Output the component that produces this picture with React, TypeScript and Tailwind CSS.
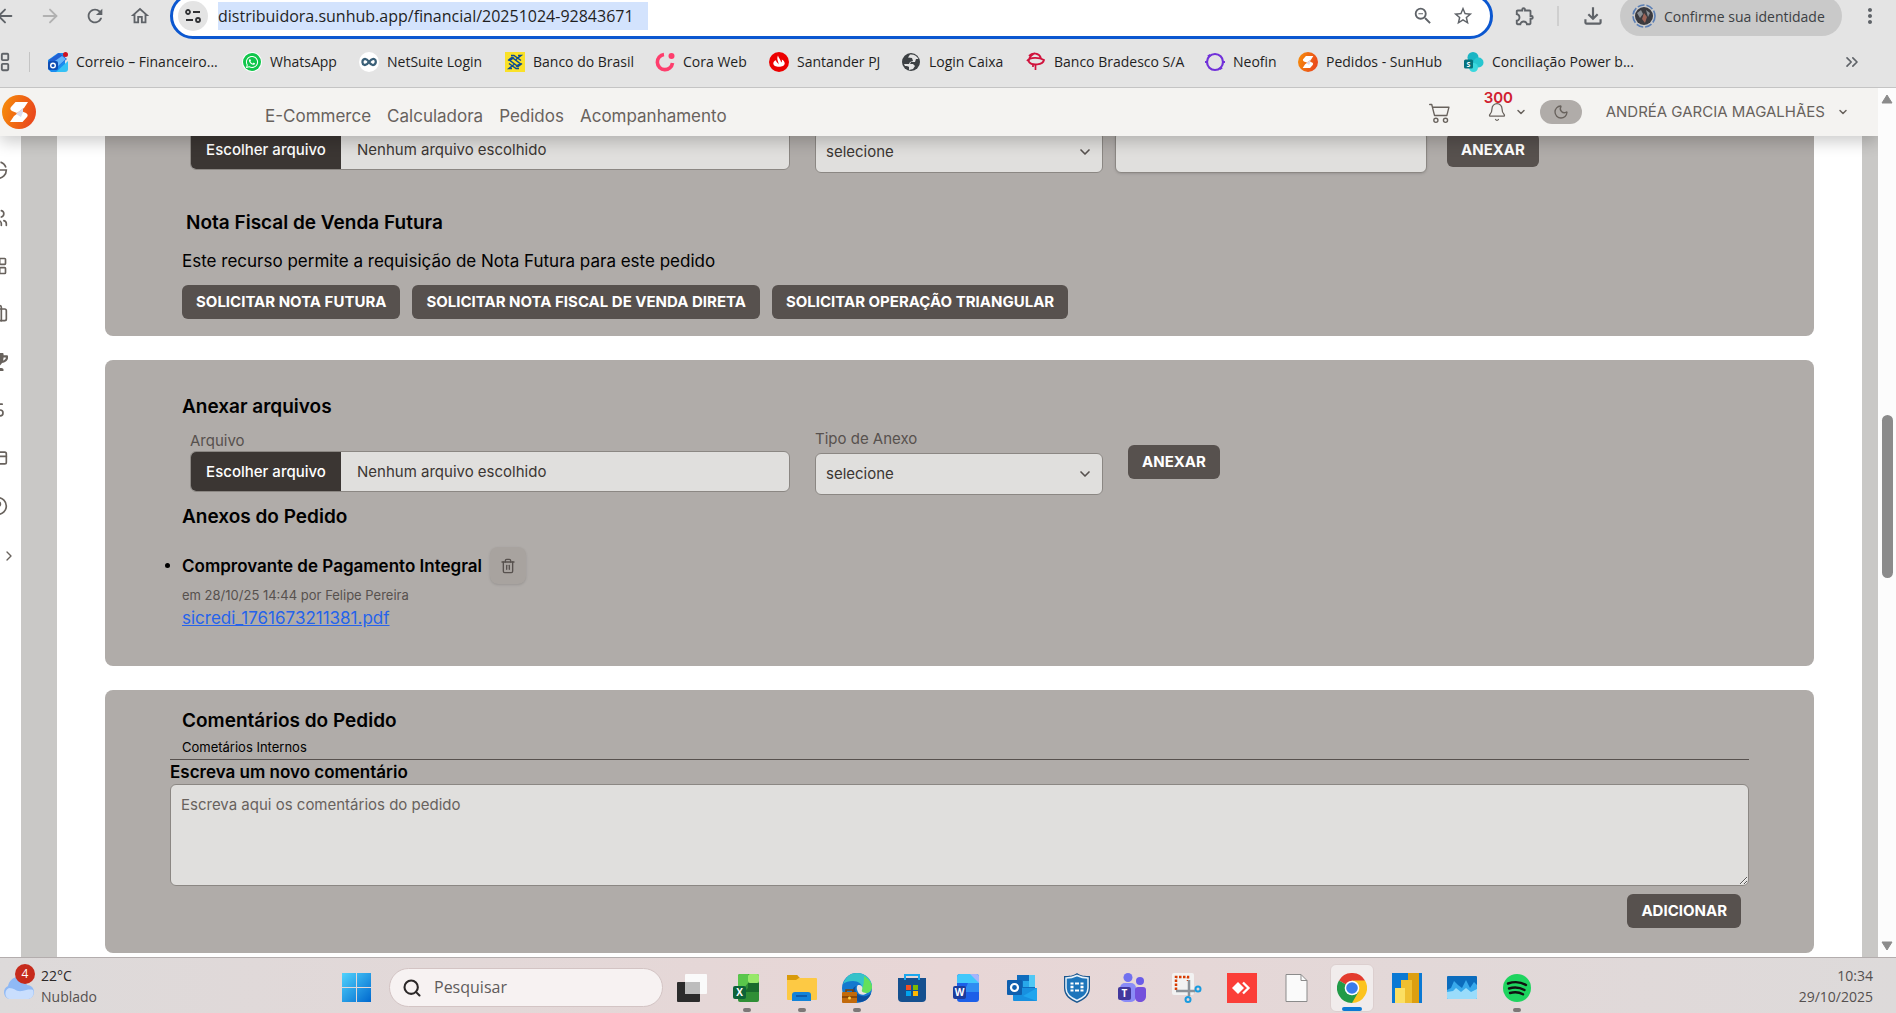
import type { ReactNode } from 'react'
import {
  ArrowLeft,
  ArrowRight,
  Bell,
  Briefcase,
  ChevronDown,
  ChevronRight,
  ChevronsRight,
  CircleHelp,
  CreditCard,
  DollarSign,
  LayoutGrid,
  Moon,
  Search,
  Trash2,
  Users,
} from 'lucide-react'
import {
  MdMoreVert,
  MdOutlineExtension,
  MdOutlineFileDownload,
  MdOutlineHome,
  MdRefresh,
  MdStarBorder,
  MdZoomOut,
} from 'react-icons/md'
import { FaTrophy, FaWhatsapp } from 'react-icons/fa'
import { BsCart2 } from 'react-icons/bs'

/* Logos */

function SunHubLogo({ className }: { className: string }) {
  return (
    <svg viewBox="0 0 34 34" className={className} aria-hidden="true">
      <defs>
        <linearGradient id="sun" x1="0" y1="0" x2="1" y2="0.3">
          <stop offset="0" stopColor="#f79009" />
          <stop offset="1" stopColor="#ea4b1c" />
        </linearGradient>
      </defs>
      <circle cx="17" cy="17" r="17" fill="url(#sun)" />
      <path d="M13.500 7H26l-4 6-7 5-5-2c-2-1-2-3-1-4z" fill="#fff" />
      <path d="M20.500 27H8l4-6 7-5 5 2c2 1 2 3 1 4z" fill="#fff" />
      <path d="M21 13l-7 6 5 3 2-5z" fill="#d9dcf0" />
    </svg>
  )
}

function MailLogo() {
  return (
    <svg viewBox="0 0 20 20" className="size-5">
      <path d="M0 8 10 1l7 0v17l-3 2H3l-3-3z" fill="#1a8cf0" />
      <path d="M8 20 20 9v8a3 3 0 0 1-3 3z" fill="#35c1f5" />
      <path d="m1 8 10-7 8 6-10 8z" fill="#2160d4" />
      <path d="m4 11 10-7 4 3-9 8z" fill="#65b6fb" />
      <rect y="9" width="10" height="9" rx="2" fill="#0f4db3" />
      <circle cx="5" cy="13.500" r="2.300" fill="none" stroke="#fff" strokeWidth="1.400" />
      <circle cx="17.500" cy="2.500" r="2.500" fill="#d1101f" />
    </svg>
  )
}

function WhatsLogo() {
  return (
    <span className="flex size-5 items-center justify-center rounded-full bg-white">
      <span className="flex size-[18px] items-center justify-center rounded-full bg-[#10c64b]">
        <FaWhatsapp className="size-3.5 text-white" />
      </span>
    </span>
  )
}

function NetSuiteLogo() {
  return (
    <svg viewBox="0 0 20 20" className="size-5">
      <circle cx="10" cy="10" r="10" fill="#fff" />
      <path
        d="M10 10C8 7 6 6.500 4.500 7.500S3 12 5 12.800 8.500 12 10 10s3.500-3.800 5.500-2.800 1.500 4.300 0 5.300S12 13 10 10z"
        fill="none"
        stroke="#3b6078"
        strokeWidth="2.300"
      />
    </svg>
  )
}

function BancoBrasilLogo() {
  return (
    <svg viewBox="0 0 20 20" className="size-5">
      <rect width="20" height="20" fill="#fae128" />
      <path
        d="M6 3.500h3l7 5M14 16.500h-3l-7-5M3 8.500l4-3 8 6-4 3M17 11.500l-4 3-8-6 4-3M13 3.500l3 0-5 4M7 16.500l-3 0 5-4"
        fill="none"
        stroke="#0b4a94"
        strokeWidth="1.500"
      />
    </svg>
  )
}

function CoraLogo() {
  return (
    <svg viewBox="0 0 20 20" className="size-5">
      <path d="M9 2.500a7.600 7.600 0 1 0 8.500 8.500" fill="none" stroke="#fe3e6d" strokeWidth="3.600" />
      <circle cx="16.500" cy="4" r="3" fill="#fe3e6d" />
    </svg>
  )
}

function SantanderLogo() {
  return (
    <svg viewBox="0 0 20 20" className="size-5">
      <circle cx="10" cy="10" r="10" fill="#ec0000" />
      <path
        d="M9 3.500c0 2 3.200 4.500 3.200 7 .9-1 .9-2 .5-3 2 1 3 2.500 3 4 0 2-2.700 3.300-5.700 3.300s-5.700-1.300-5.700-3.300c0-1.500 1-2.500 2.700-3.200 0 1.800 2 2.500 2.500 4.200C10 9.500 7 7.500 9 3.500z"
        fill="#fff"
      />
    </svg>
  )
}

function GlobeLogo() {
  return (
    <svg viewBox="0 0 20 20" className="size-5">
      <circle cx="10" cy="10" r="9" fill="#3c4043" />
      <path
        d="M9 2.500 7 5.500l4 .5 1 3-3 1-1 2H3l1 2c2 0 3 0 4 1v3l4-1 2-3-2-2H9l1-2h4l1-3 2.500 0C16 4 13 2 9 2.500z"
        fill="#e5e5e5"
      />
    </svg>
  )
}

function BradescoLogo() {
  return (
    <svg viewBox="0 0 20 20" className="size-5">
      <path
        d="M3 4c4-4 10-3 12 2M1 9c3-4 12-4 17-1-1 5-12 6-15 2-1-3 1-6 6-9"
        fill="none"
        stroke="#d0123c"
        strokeWidth="1.800"
      />
      <path d="M7 13v2M9.500 13v5" fill="none" stroke="#d0123c" strokeWidth="1.700" />
    </svg>
  )
}

function NeofinLogo() {
  return (
    <svg viewBox="0 0 20 20" className="size-5">
      <circle cx="10" cy="10" r="8" fill="none" stroke="#7131d9" strokeWidth="2.200" />
      <path d="M3 4.500 5.500 3M17 15.500 14.500 17M1 11v-2M19 11v-2" stroke="#7131d9" strokeWidth="2.500" />
    </svg>
  )
}

function SharePointLogo() {
  return (
    <svg viewBox="0 0 20 20" className="size-5">
      <circle cx="9" cy="5.500" r="5.500" fill="#1bb5c4" />
      <circle cx="14.500" cy="10.500" r="5" fill="#26c6d0" />
      <circle cx="9.500" cy="15.500" r="4.500" fill="#3bd8de" />
      <rect y="7.500" width="9" height="9" rx="1.500" fill="#04727d" />
      <text x="4.500" y="14.500" fontSize="7" fontWeight="700" textAnchor="middle" fill="#fff" fontFamily="Open Sans">
        S
      </text>
    </svg>
  )
}

const bookmarks: { label: string; icon: ReactNode; width: string }[] = [
  { label: 'Correio – Financeiro...', icon: <MailLogo />, width: 'w-[194px]' },
  { label: 'WhatsApp', icon: <WhatsLogo />, width: 'w-[117px]' },
  { label: 'NetSuite Login', icon: <NetSuiteLogo />, width: 'w-[146px]' },
  { label: 'Banco do Brasil', icon: <BancoBrasilLogo />, width: 'w-[150px]' },
  { label: 'Cora Web', icon: <CoraLogo />, width: 'w-[114px]' },
  { label: 'Santander PJ', icon: <SantanderLogo />, width: 'w-[132px]' },
  { label: 'Login Caixa', icon: <GlobeLogo />, width: 'w-[125px]' },
  { label: 'Banco Bradesco S/A', icon: <BradescoLogo />, width: 'w-[179px]' },
  { label: 'Neofin', icon: <NeofinLogo />, width: 'w-[93px]' },
  { label: 'Pedidos - SunHub', icon: <SunHubLogo className="size-5" />, width: 'w-[166px]' },
  { label: 'Conciliação Power b...', icon: <SharePointLogo />, width: 'w-[180px]' },
]

function BrowserBar() {
  return (
    <div className="shrink-0 overflow-hidden border-b border-[#c4c4c4] bg-[#e4e4e4] font-['Open_Sans',sans-serif] text-[#5f6368]">
      <div className="-mt-[7px] flex h-[46px] items-center">
        <div className="-ml-1.5 flex w-44 shrink-0 items-center gap-[23px]">
          <button aria-label="Voltar"><ArrowLeft className="size-[22px]" /></button>
          <button aria-label="Avançar" className="text-[#b1b1b1]"><ArrowRight className="size-[22px]" /></button>
          <button aria-label="Recarregar"><MdRefresh className="size-[22px]" /></button>
          <button aria-label="Início"><MdOutlineHome className="size-[22px]" /></button>
        </div>
        <div className="flex h-[46px] flex-1 items-center rounded-full border-[3px] border-[#0b57d0] bg-white pr-4 pl-[5px]">
          <span className="flex size-[30px] items-center justify-center rounded-full bg-[#e4e4e4]">
            <svg viewBox="0 0 16 16" className="size-4" fill="none" stroke="#303134" strokeWidth="1.800">
              <circle cx="3" cy="4" r="2" />
              <path d="M8 4h7M1 12h7" />
              <circle cx="13" cy="12" r="2" />
            </svg>
          </span>
          <input
            aria-label="Endereço"
            readOnly
            value="distribuidora.sunhub.app/financial/20251024-92843671"
            className="ml-[10px] h-7 w-[430px] bg-[#d3e3fd] text-[16px] text-[#1f1f1f] outline-none"
          />
          <div className="ml-auto flex gap-[18px]">
            <button aria-label="Zoom"><MdZoomOut className="size-[22px]" /></button>
            <button aria-label="Favoritar"><MdStarBorder className="size-[22px]" /></button>
          </div>
        </div>
        <div className="flex w-[403px] shrink-0 items-center pl-[21px]">
          <button aria-label="Extensões"><MdOutlineExtension className="size-[22px]" /></button>
          <span className="ml-[21px] h-5 w-0.5 bg-[#cfcfcf]" />
          <button aria-label="Downloads" className="ml-[21px]"><MdOutlineFileDownload className="size-[26px]" /></button>
          <button className="ml-[14px] flex h-10 w-[222px] items-center gap-2 rounded-full bg-[#c9c9c9] pl-3 text-[14px] text-[#3c4043]">
            <svg viewBox="0 0 24 24" className="size-6 shrink-0">
              <circle cx="12" cy="12" r="11" fill="none" stroke="#5b7fb5" strokeWidth="1.600" strokeDasharray="7 2" />
              <circle cx="12" cy="12" r="9" fill="#3a3a3f" />
              <path d="M5 9l4-3 2 4-3 4zM14 6l4 3-2 4z" fill="#8a8f94" />
              <path d="M12 9l3 4-2 6-3-4z" fill="#9c6357" />
            </svg>
            <span className="whitespace-nowrap">Confirme sua identidade</span>
          </button>
          <button aria-label="Menu" className="ml-4"><MdMoreVert className="size-6" /></button>
        </div>
      </div>
      <div className="flex h-12 items-center pr-[34px] pb-0.5">
        <LayoutGrid className="-ml-[11px] size-[22px] shrink-0" />
        <span className="ml-[18px] h-5 w-px bg-[#c4c4c4]" />
        <nav className="ml-[18px] flex">
          {bookmarks.map((b) => (
            <a key={b.label} href="#" className={`flex items-center gap-2 text-[14px] leading-5 whitespace-nowrap text-[#1f1f1f] ${b.width}`}>
              <span className="shrink-0">{b.icon}</span>
              {b.label}
            </a>
          ))}
        </nav>
        <ChevronsRight className="ml-auto size-5" />
      </div>
    </div>
  )
}

function AppHeader() {
  return (
    <header className="relative z-10 flex h-12 shrink-0 items-center bg-[#f4f3f1] text-[#68625d] shadow-[0_6px_16px_rgba(0,0,0,0.2)]">
      <a href="#" aria-label="SunHub" className="ml-0.5 w-[263px]">
        <SunHubLogo className="size-[34px]" />
      </a>
      <nav className="flex gap-4 pt-2 text-[17px] leading-6">
        <a href="#">E-Commerce</a>
        <a href="#">Calculadora</a>
        <a href="#">Pedidos</a>
        <a href="#">Acompanhamento</a>
      </nav>
      <div className="ml-auto flex items-center pr-[29px]">
        <button aria-label="Carrinho"><BsCart2 className="size-[22px]" /></button>
        <button aria-label="Notificações" className="relative ml-9 flex items-center gap-2">
          <span className="absolute -top-3.5 -left-[3px] text-[15px] leading-5 font-semibold text-[#d02030]">300</span>
          <Bell className="size-5" strokeWidth={1.5} />
          <ChevronDown className="size-3" strokeWidth={3} />
        </button>
        <button aria-label="Tema" className="ml-[13px] flex h-6 w-[42px] items-center justify-center rounded-full bg-[#b0aca9]">
          <Moon className="size-4" />
        </button>
        <button className="ml-6 flex items-center gap-3 text-[15px] whitespace-nowrap">
          ANDRÉA GARCIA MAGALHÃES
          <ChevronDown className="size-3" strokeWidth={3} />
        </button>
      </div>
    </header>
  )
}

function Sidebar() {
  return (
    <aside className="w-[21px] shrink-0 overflow-hidden bg-white pt-6 text-[#68625d]">
      <div className="-ml-3 flex w-5 flex-col gap-7">
        <svg viewBox="0 0 24 24" className="size-5" fill="none" stroke="currentColor" strokeWidth="2">
          <path d="M3 12h19a10 10 0 0 1-10 10A10 10 0 0 1 3 12z" />
          <path d="M15 2.500A10 10 0 0 1 21.500 9" />
        </svg>
        <Users className="size-5" />
        <LayoutGrid className="size-5" />
        <Briefcase className="size-5" />
        <FaTrophy className="size-5" />
        <DollarSign className="size-5" />
        <CreditCard className="size-5" />
        <CircleHelp className="size-5" />
      </div>
      <ChevronRight className="mt-8 ml-px size-4" />
    </aside>
  )
}

function Button({ children, className = '' }: { children: ReactNode; className?: string }) {
  return (
    <button className={`h-[34px] shrink-0 rounded-md bg-[#57514e] px-3.5 text-[15px] leading-5 font-bold whitespace-nowrap text-white ${className}`}>
      {children}
    </button>
  )
}

function FileField({ id }: { id: string }) {
  return (
    <div className="w-[600px] pt-0.5">
      <label htmlFor={id} className="block text-[15px] leading-5 text-[#57514e]">Arquivo</label>
      <label htmlFor={id} className="flex h-[41px] items-stretch overflow-hidden rounded-md border border-[#8b8783] bg-[#e0dfdd] text-[15px] leading-5 text-[#3b3633]">
        <span className="flex w-[150px] items-center justify-center bg-[#3b3633] font-medium text-white">Escolher arquivo</span>
        <span className="flex items-center pl-4">Nenhum arquivo escolhido</span>
      </label>
      <input id={id} type="file" className="sr-only" />
    </div>
  )
}

function TypeField({ id }: { id: string }) {
  return (
    <div className="ml-[25px] w-72">
      <label htmlFor={id} className="block text-[15px] leading-5 text-[#57514e]">Tipo de Anexo</label>
      <div className="relative mt-1">
        <select id={id} className="h-[42px] w-full appearance-none rounded-md border border-[#8b8783] bg-[#e0dfdd] px-2.5 text-[15px] text-[#3b3633]">
          <option>selecione</option>
        </select>
        <ChevronDown className="pointer-events-none absolute top-[13px] right-2.5 size-4 text-[#57514e]" strokeWidth={2.5} />
      </div>
    </div>
  )
}

function Card({ children, className = '' }: { children: ReactNode; className?: string }) {
  return <section className={`rounded-lg bg-[#b0aca9] px-[65px] text-black ${className}`}>{children}</section>
}

function OrderPage() {
  return (
    <main className="flex min-w-0 flex-1 flex-col gap-6 bg-white px-12">
      <Card className="-mt-[29px] pb-[17px]">
        <div className="flex items-start pl-5">
          <FileField id="nota-arquivo" />
          <TypeField id="nota-tipo" />
          <input aria-label="Número" className="mt-6 ml-3 h-[42px] w-[312px] rounded-md border border-[#8b8783] bg-[#e0dfdd] px-2.5 text-[15px] shadow-sm" />
          <Button className="mt-[26px] ml-5">ANEXAR</Button>
        </div>
        <div className="pl-3">
          <h2 className="mt-9 pl-1 text-[19px] leading-7 font-semibold">Nota Fiscal de Venda Futura</h2>
          <p className="mt-3 text-[17px] leading-6">Este recurso permite a requisição de Nota Futura para este pedido</p>
          <div className="mt-3 flex gap-3">
            <Button>SOLICITAR NOTA FUTURA</Button>
            <Button>SOLICITAR NOTA FISCAL DE VENDA DIRETA</Button>
            <Button>SOLICITAR OPERAÇÃO TRIANGULAR</Button>
          </div>
        </div>
      </Card>

      <Card className="pt-[33px] pb-9">
        <h2 className="pl-3 text-[19px] leading-7 font-semibold">Anexar arquivos</h2>
        <div className="mt-2 flex items-start pl-5">
          <FileField id="anexo-arquivo" />
          <TypeField id="anexo-tipo" />
          <Button className="mt-4 ml-[25px]">ANEXAR</Button>
        </div>
        <h2 className="mt-2 pl-3 text-[19px] leading-7 font-semibold">Anexos do Pedido</h2>
        <ul className="mt-4 pl-3">
          <li>
            <div className="relative flex items-center gap-2">
              <span className="absolute -left-[17px] size-[5px] rounded-full bg-black" />
              <strong className="text-[17px] leading-6 font-semibold">Comprovante de Pagamento Integral</strong>
              <button aria-label="Excluir" className="flex h-[37px] w-9 items-center justify-center rounded-lg bg-[#a8a39f] text-[#57514e] shadow-sm">
                <Trash2 className="size-4" />
              </button>
            </div>
            <p className="mt-px text-[13px] leading-5 text-[#57514e]">em 28/10/25 14:44 por Felipe Pereira</p>
            <a href="#" className="block w-fit pt-px text-[17px] leading-6 text-[#2563eb] underline">sicredi_1761673211381.pdf</a>
          </li>
        </ul>
      </Card>

      <Card className="pt-[17px] pb-[25px]">
        <h2 className="pl-3 text-[19px] leading-7 font-semibold">Comentários do Pedido</h2>
        <p className="mt-0.5 border-b border-[#57514e] pb-0.5 pl-3 text-[13px] leading-5">Cometários Internos</p>
        <label htmlFor="comentario" className="block text-[17px] leading-6 font-semibold">Escreva um novo comentário</label>
        <textarea
          id="comentario"
          placeholder="Escreva aqui os comentários do pedido"
          className="block h-[102px] w-full rounded-md border border-[#8b8783] bg-[#e0dfdd] px-2.5 py-2.5 text-[15px] leading-5 placeholder:text-[#68625d]"
        />
        <div className="mt-2 flex justify-end pr-2">
          <Button>ADICIONAR</Button>
        </div>
      </Card>
    </main>
  )
}

function PageScrollbar() {
  return (
    <div className="flex w-[18px] shrink-0 flex-col items-center justify-between bg-[#fcfcfc] py-1.5">
      <svg viewBox="0 0 12 10" className="h-2.5 w-3"><path d="M6 1 11 9H1z" fill="#8b8b8b" stroke="#8b8b8b" strokeLinejoin="round" /></svg>
      <div className="mb-[52px] h-[163px] w-[11px] rounded-full bg-[#8b8b8b]" />
      <svg viewBox="0 0 12 10" className="h-2.5 w-3"><path d="M6 9 11 1H1z" fill="#8b8b8b" stroke="#8b8b8b" strokeLinejoin="round" /></svg>
    </div>
  )
}

/* Taskbar */

function AppSvg({ children }: { children: ReactNode }) {
  return <svg viewBox="0 0 30 30" className="size-[30px]" aria-hidden="true">{children}</svg>
}

function Tile({ letter, color, x = 0, y = 13 }: { letter: string; color: string; x?: number; y?: number }) {
  return (
    <>
      <rect x={x} y={y} width="13" height="13" rx="2" fill={color} />
      <text x={x + 6.5} y={y + 10} fontSize="10" fontWeight="700" textAnchor="middle" fill="#fff" fontFamily="Open Sans">
        {letter}
      </text>
    </>
  )
}

const apps: { name: string; state?: 'open' | 'active'; icon: ReactNode }[] = [
  {
    name: 'Visão de Tarefas',
    icon: (
      <AppSvg>
        <rect y="9" width="23" height="20" rx="1" fill="#2b2b2b" />
        <rect x="8" y="1" width="22" height="20" rx="1" fill="#fafafa" />
        <path d="M8 9h15v12H8z" fill="#bdbdbd" />
      </AppSvg>
    ),
  },
  {
    name: 'Excel',
    state: 'open',
    icon: (
      <AppSvg>
        <rect x="6" y="1" width="21" height="28" rx="2" fill="#2f8f35" />
        <path d="M6 10V3a2 2 0 0 1 2-2h8v9l-4 5H6z" fill="#59c64b" />
        <rect x="16" y="1" width="11" height="9" rx="2" fill="#97e869" />
        <path d="M16 10h11v9H12l4-4z" fill="#196b2c" />
        <Tile letter="X" color="#0d6338" x={1} />
      </AppSvg>
    ),
  },
  {
    name: 'Explorador de Arquivos',
    state: 'open',
    icon: (
      <AppSvg>
        <path d="M0 3a1 1 0 0 1 1-1h9l3 3h16v8H0z" fill="#dd9b06" />
        <rect y="5" width="30" height="22" rx="1" fill="#fdc944" />
        <path d="M0 2h10l2 3-3 2H0z" fill="#d99a0a" />
        <path d="M5 28v-6a3 3 0 0 1 3-3h13a3 3 0 0 1 3 3v6z" fill="#1283d8" />
        <path d="M9 23h11" stroke="#0b4f9c" strokeWidth="1.500" />
      </AppSvg>
    ),
  },
  {
    name: 'Edge',
    state: 'open',
    icon: (
      <AppSvg>
        <circle cx="15" cy="15" r="15" fill="#1478cf" />
        <path d="M1 11C4 3 9 0 15 0c9 0 15 7 15 13 0 5-4 8-8 7-4 0-3-2-2-4 1-5-4-8-9-8-4 0-8 1-10 3z" fill="#35c2c9" />
        <path d="M22 3c5 3 8 7 8 11 0 4-4 7-8 6-3-1-3-2-2-4 2-4 2-9 2-13z" fill="#63e05a" />
        <path d="M14 13c-2 4 0 9 6 10 4 1 7-1 9-3-1 5-6 9-11 9-8-1-11-13-4-16z" fill="#0b4e9e" />
        <path d="M16 12c4 0 5 2 4 5-1 2 2 3 5 3-3 3-8 2-9-1-1-2-2-5 0-7z" fill="#e9e3e3" />
        <rect y="19" width="15" height="11" rx="1" fill="#c26a0c" />
        <path d="M0 24h15M4 19v-2h7v2" fill="none" stroke="#7e3f05" strokeWidth="1.500" />
        <circle cx="7.500" cy="25" r="1.500" fill="#ffd44d" />
      </AppSvg>
    ),
  },
  {
    name: 'Microsoft Store',
    icon: (
      <AppSvg>
        <path d="M1 5h28v20a4 4 0 0 1-4 4H5a4 4 0 0 1-4-4z" fill="#15508f" />
        <path d="M8 7V2h14v5" fill="none" stroke="#1ba7ee" strokeWidth="2" />
        <path d="M9 12h5v5H9z" fill="#f25022" />
        <path d="M16 12h5v5h-5z" fill="#7fba00" />
        <path d="M9 18h5v5H9z" fill="#00a4ef" />
        <path d="M16 18h5v5h-5z" fill="#ffb900" />
      </AppSvg>
    ),
  },
  {
    name: 'Word',
    icon: (
      <AppSvg>
        <rect x="5" y="1" width="22" height="28" rx="3" fill="#1c5fe8" />
        <path d="M5 10V4a3 3 0 0 1 3-3h16a3 3 0 0 1 3 3v6z" fill="#41c8fb" />
        <path d="M27 10v9H12l4-9z" fill="#2e8df2" />
        <path d="M18 1h6a3 3 0 0 1 3 3v6z" fill="#a5b4fb" />
        <Tile letter="W" color="#1c3c9c" x={1} />
      </AppSvg>
    ),
  },
  {
    name: 'Outlook',
    icon: (
      <AppSvg>
        <rect x="10" y="2" width="18" height="20" fill="#0f6cbd" />
        <path d="M16 8h6v6h-6z" fill="#28a8ea" />
        <path d="M22 2h6v6h-6zM22 8h6v6h-6z" fill="#50c8f5" />
        <path d="M6 15l24 0v12a1 1 0 0 1-1 1H7a1 1 0 0 1-1-1z" fill="#1790e0" />
        <path d="M30 15 16 23l14 5z" fill="#1fa5ee" />
        <rect y="7" width="15" height="15" rx="1" fill="#0f5fae" />
        <circle cx="7.500" cy="14.500" r="3.500" fill="none" stroke="#fff" strokeWidth="2.200" />
      </AppSvg>
    ),
  },
  {
    name: 'Segurança',
    icon: (
      <AppSvg>
        <path d="M15 0c4 3 8 3 13 3v12c0 8-6 12-13 15C8 27 2 23 2 15V3c5 0 9 0 13-3z" fill="#1b578f" />
        <path d="M15 2.500c4 2 7 2.500 11 2.500v10c0 6-5 10-11 12.500C9 25 4 21 4 15V5c4 0 7-.5 11-2.500z" fill="#1d75bb" stroke="#e8f2fa" strokeWidth="1.500" />
        <path d="M8.500 9.500h3v2h-3zM13 9.500h4v2h-4zM18.500 9.500h3v2h-3zM8.500 12.800h3v2.400h-3zM18.500 12.800h3v2.400h-3zM8.500 16.500h3v2h-3zM13 16.500h4v2h-4zM18.500 16.500h3v2h-3z" fill="#fff" />
      </AppSvg>
    ),
  },
  {
    name: 'Teams',
    icon: (
      <AppSvg>
        <circle cx="11" cy="4.500" r="4.500" fill="#7170ef" />
        <circle cx="23" cy="8" r="4" fill="#6a5ce8" />
        <rect x="3" y="10" width="16" height="19" rx="5" fill="#8a8bf7" />
        <path d="M18 17a3 3 0 0 1 3-3h5a3 3 0 0 1 3 3v6c0 4-3 6-6 6s-5-2-5-5z" fill="#7450dc" />
        <Tile letter="T" color="#42389d" x={1} y={14} />
      </AppSvg>
    ),
  },
  {
    name: 'Ferramenta de Captura',
    icon: (
      <AppSvg>
        <rect width="22" height="22" rx="2" fill="#f2f2f2" />
        <path d="M4 17V4h12v4" fill="none" stroke="#d83b01" strokeWidth="2.500" strokeDasharray="2.500 1.500" />
        <path d="M17 7v16M4 18h19" stroke="#8b9299" strokeWidth="2.500" />
        <circle cx="26" cy="16" r="2.500" fill="none" stroke="#199bdf" strokeWidth="2" />
        <circle cx="16" cy="26.500" r="2.500" fill="none" stroke="#199bdf" strokeWidth="2" />
      </AppSvg>
    ),
  },
  {
    name: 'AnyDesk',
    icon: (
      <AppSvg>
        <rect width="30" height="30" fill="#fb3e38" />
        <path d="M5 15l6-6 6 6-6 6z" fill="#fff" />
        <path d="M16 9.500 21.500 15 16 20.500" fill="none" stroke="#fff" strokeWidth="2.300" />
      </AppSvg>
    ),
  },
  {
    name: 'Documento',
    icon: (
      <AppSvg>
        <path d="M4 1.500h15l6 6V28.500H4z" fill="#fafafa" stroke="#8b8b8b" />
        <path d="M19 1.500v6h6" fill="none" stroke="#8b8b8b" />
      </AppSvg>
    ),
  },
  {
    name: 'Chrome',
    state: 'active',
    icon: (
      <AppSvg>
        <path d="M15 15 2 7.500a15 15 0 0 1 26 0z" fill="#e33b2e" />
        <path d="M15 15V7.500h13a15 15 0 0 1-13 22.500z" fill="#fcc31e" />
        <path d="M15 15l6.500 3.800L15 30A15 15 0 0 1 2 7.500z" fill="#229a48" />
        <circle cx="15" cy="15" r="7.300" fill="#fff" />
        <circle cx="15" cy="15" r="5.800" fill="#3a7ceb" />
      </AppSvg>
    ),
  },
  {
    name: 'Power BI',
    icon: (
      <AppSvg>
        <rect width="30" height="30" fill="#0a79d4" />
        <rect x="16" width="11" height="30" fill="#dd9f10" />
        <rect x="9" y="7" width="11" height="23" fill="#efbf30" />
        <rect x="3" y="15" width="10" height="15" fill="#fbdf62" />
      </AppSvg>
    ),
  },
  {
    name: 'Monitor de Desempenho',
    icon: (
      <AppSvg>
        <rect y="3" width="30" height="23" rx="1" fill="#0b6cbd" />
        <path d="M0 17l4-2 3-7 4 4 4 3 4-8 4 8 4-6 3 3v14H0z" fill="#38a9ec" />
        <path d="M0 19l6-1 3-3 5 4 5-4 5 4 6-3v9a1 1 0 0 1-1 1H1a1 1 0 0 1-1-1z" fill="#9adcfb" />
      </AppSvg>
    ),
  },
  {
    name: 'Spotify',
    state: 'open',
    icon: (
      <AppSvg>
        <circle cx="15" cy="15" r="14" fill="#1ed45f" />
        <path d="M6 10.500c6-2 13-1.500 18 1.500M7 15.500c5-1.500 11-1 15.500 1.500M8 20c4-1 9-1 13 1.300" fill="none" stroke="#111" strokeWidth="2.400" strokeLinecap="round" />
      </AppSvg>
    ),
  },
]

function Taskbar() {
  return (
    <footer className="flex h-14 shrink-0 items-center overflow-hidden border-t border-[#b3adad] bg-linear-to-r from-[#dddada] via-[#e8d6d6] to-[#dddada] font-['Open_Sans',sans-serif] text-[14px] leading-[21px] text-[#55504f]">
      <div className="flex w-[342px] shrink-0 items-center">
        <div className="relative ml-0.5 w-[39px]">
          <svg viewBox="0 0 32 24" className="mt-1 h-6 w-8">
            <path d="M7 23a7 7 0 0 1-1-13C7 5 11 1 16 1c6 0 8 4 9 8 4 0 7 3 7 7s-3 7-7 7z" fill="#8fb9f5" />
            <path d="M7 23a6 6 0 0 1 0-11c6 0 7 4 13 3 4-1 8-2 11-1 2 4-1 9-6 9z" fill="#c9defd" />
          </svg>
          <span className="absolute -top-2 left-[13px] flex size-5 items-center justify-center rounded-full bg-[#c62b1c] text-[12px] leading-4 text-white">4</span>
        </div>
        <div className="whitespace-nowrap">
          <p className="text-[#2b2727]">22°C</p>
          <p>Nublado</p>
        </div>
      </div>
      <div className="flex items-center pt-1">
        <button aria-label="Iniciar" className="shrink-0">
          <svg viewBox="0 0 29 29" className="size-[29px]">
            <defs>
              <linearGradient id="win" gradientUnits="userSpaceOnUse" x1="0" y1="0" x2="29" y2="29">
                <stop offset="0" stopColor="#50d3fd" />
                <stop offset="1" stopColor="#0068ce" />
              </linearGradient>
            </defs>
            <path d="M0 0h14v14H0zM15 0h14v14H15zM0 15h14v14H0zM15 15h14v14H15z" fill="url(#win)" />
          </svg>
        </button>
        <label className="ml-[18px] flex h-[39px] w-[274px] shrink-0 items-center gap-3 rounded-full border border-[#d3c4c4] bg-[#f7f2f2] pl-3">
          <Search className="size-5 shrink-0 text-[#2b2727]" strokeWidth={2.5} />
          <input placeholder="Pesquisar" aria-label="Pesquisar" className="w-full bg-transparent text-[16px] outline-none placeholder:text-[#605b5b]" />
        </label>
        <div className="ml-px flex">
          {apps.map((app) => (
            <button key={app.name} aria-label={app.name} className="flex w-[55px] items-center justify-center">
              <span
                className={`relative flex h-12 w-11 items-center justify-center rounded-md ${app.state === 'active' ? 'border border-[#dccfcf] bg-[#f1ecec]' : ''}`}
              >
                {app.icon}
                {app.state === 'open' && <span className="absolute bottom-0 h-1 w-2 rounded-full bg-[#7d7777]" />}
                {app.state === 'active' && <span className="absolute bottom-0 h-1 w-5 rounded-full bg-[#0b79d4]" />}
              </span>
            </button>
          ))}
        </div>
      </div>
      <div className="ml-auto pr-[23px] text-right">
        <p>10:34</p>
        <p>29/10/2025</p>
      </div>
    </footer>
  )
}

export default function App() {
  return (
    <div className="flex h-screen flex-col overflow-hidden bg-white font-['Inter',sans-serif]">
      <BrowserBar />
      <div className="flex min-h-0 flex-1">
        <div className="flex min-w-0 flex-1 flex-col overflow-hidden">
          <AppHeader />
          <div className="flex min-h-0 flex-1">
            <Sidebar />
            <div className="w-9 shrink-0 bg-[#c9c8c6]" />
            <OrderPage />
            <div className="w-4 shrink-0 bg-[#c9c8c6]" />
          </div>
        </div>
        <PageScrollbar />
      </div>
      <Taskbar />
    </div>
  )
}
